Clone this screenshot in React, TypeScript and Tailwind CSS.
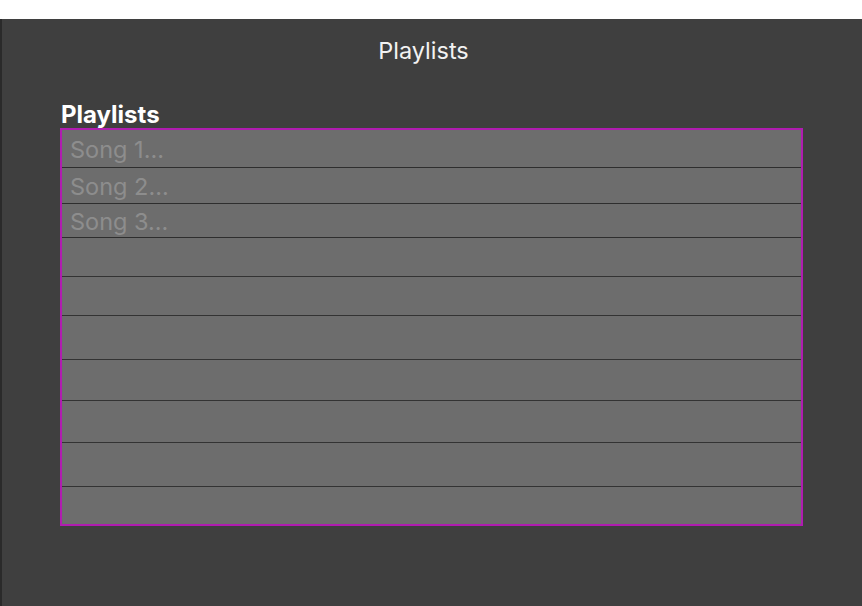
import React from "react";

const rows: { cls: string; text?: string }[] = [
  { cls: "h-[38px] pt-[6px] border-b border-[#2e2e2e]", text: "Song 1..." },
  { cls: "h-[36px] pt-[5px] border-b border-[#2e2e2e]", text: "Song 2..." },
  { cls: "h-[34px] pt-[4px] border-b border-[#2e2e2e]", text: "Song 3..." },
  { cls: "h-[39px] border-b border-[#333333]" },
  { cls: "h-[39px] border-b border-[#333333]" },
  { cls: "h-[44px] border-b border-[#333333]" },
  { cls: "h-[41px] border-b border-[#333333]" },
  { cls: "h-[42px] border-b border-[#333333]" },
  { cls: "h-[44px] border-b border-[#333333]" },
  { cls: "h-[37px]" },
];

export default function App() {
  return (
    <div
      className="flex h-[606px] w-[862px] flex-col bg-white"
      style={{ fontFamily: "Inter, 'Noto Sans', sans-serif" }}
    >
      <div className="h-[19px] shrink-0 bg-white" />
      <div className="flex flex-1 flex-col border-l-2 border-[#2a2a2a] bg-[#3f3f3f]">
        <div className="pt-[18px] pr-[17px] text-center text-[23.5px] leading-[28px] text-[#f2f2f2]">
          Playlists
        </div>
        <div className="mt-[34px] pl-[58px] pr-[59px]">
          <div className="box-border h-[29px] pt-[2px] pl-[1px] text-[24px] font-bold leading-[27px] text-white">
            Playlists
          </div>
          <div className="flex flex-col border-2 border-[#b01cb0] bg-[#6d6d6d]">
            {rows.map((r, i) => (
              <div
                key={i}
                className={`${r.cls} box-border pl-[8px] text-[23.5px] leading-[28px] text-[#8d8d8d]`}
              >
                {r.text}
              </div>
            ))}
          </div>
        </div>
      </div>
    </div>
  );
}
